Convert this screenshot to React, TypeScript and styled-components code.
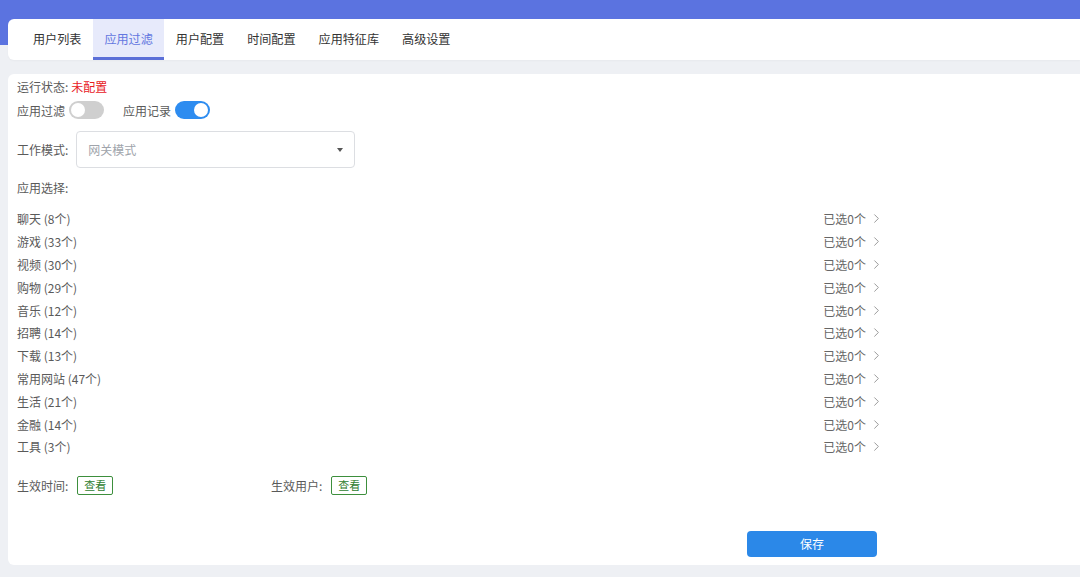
import styled, { createGlobalStyle } from 'styled-components';
import { ChevronRight } from 'lucide-react';

const GlobalStyle = createGlobalStyle`
  html, body {
    margin: 0;
    padding: 0;
  }
  body {
    font-family: "Noto Sans CJK SC", "Noto Sans", sans-serif;
    font-size: 12px;
    color: #515a6e;
    background: #eef0f4;
  }
`;

const Page = styled.div`
  width: 1080px;
  height: 577px;
  overflow: hidden;
  background: linear-gradient(#5b73e0 0, #5b73e0 45px, #eef0f4 45px);
  padding: 19px 0 0 8px;
  box-sizing: border-box;
`;

const TabBar = styled.nav`
  display: flex;
  height: 41px;
  background: #fff;
  border-radius: 6px 0 0 6px;
  padding-left: 13.5px;
  box-shadow: 0 1px 2px rgba(0, 0, 0, 0.03);
`;

const Tab = styled.div<{ $active?: boolean }>`
  display: flex;
  align-items: center;
  padding: 1px 11.5px 0;
  font-size: 12.1px;
  color: ${(p) => (p.$active ? '#6377e0' : '#333')};
  background: ${(p) => (p.$active ? '#e7eafb' : 'transparent')};
  border-bottom: 3px solid ${(p) => (p.$active ? '#5b6fd8' : 'transparent')};
  box-sizing: border-box;
`;

const Card = styled.section`
  margin-top: 14px;
  height: 491px;
  background: #fff;
  border-radius: 6px 0 0 6px;
  padding: 2px 0 0 9px;
  box-sizing: border-box;
  display: flex;
  flex-direction: column;
`;

const Line = styled.div<{ $mt?: number }>`
  display: flex;
  align-items: center;
  height: 20px;
  margin-top: ${(p) => p.$mt ?? 0}px;
  color: #5a5a5a;
`;

const Red = styled.span`
  color: #e8201e;
  margin-left: 3px;
`;

const Switch = styled.span<{ $on?: boolean }>`
  position: relative;
  display: inline-block;
  width: 35px;
  height: 18px;
  border-radius: 9px;
  margin-left: 4px;
  background: ${(p) => (p.$on ? '#2d8cf0' : '#cfcfcf')};
  &::after {
    content: '';
    position: absolute;
    top: 2px;
    left: ${(p) => (p.$on ? '19px' : '2px')};
    width: 14px;
    height: 14px;
    border-radius: 50%;
    background: #fff;
  }
`;

const SwitchGroup = styled.span`
  display: inline-flex;
  align-items: center;
  & + & {
    margin-left: 19px;
  }
`;

const FormRow = styled.div`
  display: flex;
  align-items: center;
  margin-top: 11px;
  color: #5a5a5a;
`;

const Select = styled.div`
  margin-left: 8px;
  width: 279px;
  height: 37px;
  border: 1px solid #dcdee2;
  border-radius: 4px;
  box-sizing: border-box;
  display: flex;
  align-items: center;
  justify-content: space-between;
  padding: 0 11px;
  color: #a0a4ab;
`;

const Caret = styled.span`
  width: 0;
  height: 0;
  border-left: 3.5px solid transparent;
  border-right: 3.5px solid transparent;
  border-top: 4px solid #555;
`;

const List = styled.div`
  width: 867px;
  margin-top: 10.6px;
  display: flex;
  flex-direction: column;
`;

const Item = styled.div`
  display: flex;
  align-items: center;
  justify-content: space-between;
  height: 22.8px;
  color: #5a5a5a;
`;

const Picked = styled.span`
  display: inline-flex;
  align-items: center;
  gap: 3px;
  color: #666;
  svg {
    color: #8c8c8c;
  }
`;

const Bottom = styled.div`
  display: flex;
  align-items: center;
  height: 20px;
  margin-top: 17.6px;
  color: #5a5a5a;
`;

const Field = styled.div`
  display: flex;
  align-items: center;
  width: 254px;
`;

const ViewButton = styled.button`
  margin-left: 9px;
  width: 36px;
  height: 19px;
  padding: 0;
  border: 1px solid #3d8f3d;
  border-radius: 2px;
  background: #fff;
  color: #2f7d2f;
  font-family: inherit;
  font-size: 11px;
  line-height: 17px;
`;

const SaveRow = styled.div`
  margin-top: 35px;
  padding-left: 730px;
`;

const SaveButton = styled.button`
  width: 130px;
  height: 26px;
  border: none;
  border-radius: 4px;
  background: #2b88e8;
  color: #fff;
  font-family: inherit;
  font-size: 12px;
`;

const tabs = ['用户列表', '应用过滤', '用户配置', '时间配置', '应用特征库', '高级设置'];

const categories: [string, number][] = [
  ['聊天', 8],
  ['游戏', 33],
  ['视频', 30],
  ['购物', 29],
  ['音乐', 12],
  ['招聘', 14],
  ['下载', 13],
  ['常用网站', 47],
  ['生活', 21],
  ['金融', 14],
  ['工具', 3],
];

export default function App() {
  return (
    <Page>
      <GlobalStyle />
      <TabBar>
        {tabs.map((t) => (
          <Tab key={t} $active={t === '应用过滤'}>
            {t}
          </Tab>
        ))}
      </TabBar>
      <Card>
        <Line>
          运行状态:<Red>未配置</Red>
        </Line>
        <Line $mt={4}>
          <SwitchGroup>
            应用过滤
            <Switch />
          </SwitchGroup>
          <SwitchGroup>
            应用记录
            <Switch $on />
          </SwitchGroup>
        </Line>
        <FormRow>
          工作模式:
          <Select>
            网关模式
            <Caret />
          </Select>
        </FormRow>
        <Line $mt={9}>应用选择:</Line>
        <List>
          {categories.map(([name, count]) => (
            <Item key={name}>
              <span>
                {name} ({count}个)
              </span>
              <Picked>
                已选0个
                <ChevronRight size={15} strokeWidth={1.4} />
              </Picked>
            </Item>
          ))}
        </List>
        <Bottom>
          <Field>
            生效时间:
            <ViewButton>查看</ViewButton>
          </Field>
          <Field>
            生效用户:
            <ViewButton>查看</ViewButton>
          </Field>
        </Bottom>
        <SaveRow>
          <SaveButton>保存</SaveButton>
        </SaveRow>
      </Card>
    </Page>
  );
}
